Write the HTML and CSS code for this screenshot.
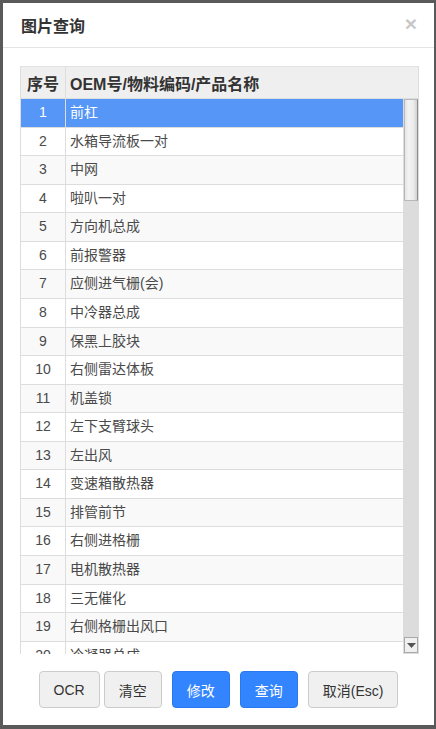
FILE: index.html
```html
<!DOCTYPE html>
<html lang="zh-CN">
<head>
  <meta charset="UTF-8">
  <meta name="viewport" content="width=device-width, initial-scale=1.0">
  <title>图片查询</title>
  <link rel="stylesheet" href="styles.css">
</head>
<body>
  <div class="modal">
    <div class="modal-header">
      <h4 class="modal-title">图片查询</h4>
      <span class="modal-close">&times;</span>
    </div>
    <div class="modal-body">
      <div class="grid">
        <table class="grid-head">
          <tr>
            <th class="col-no">序号</th>
            <th>OEM号/物料编码/产品名称</th>
          </tr>
        </table>
        <div class="grid-body">
          <div class="grid-rows">
            <table>
              <tr class="selected"><td class="col-no">1</td><td>前杠</td></tr>
              <tr><td class="col-no">2</td><td>水箱导流板一对</td></tr>
              <tr><td class="col-no">3</td><td>中网</td></tr>
              <tr><td class="col-no">4</td><td>啦叭一对</td></tr>
              <tr><td class="col-no">5</td><td>方向机总成</td></tr>
              <tr><td class="col-no">6</td><td>前报警器</td></tr>
              <tr><td class="col-no">7</td><td>应侧进气栅(会)</td></tr>
              <tr><td class="col-no">8</td><td>中冷器总成</td></tr>
              <tr><td class="col-no">9</td><td>保黑上胶块</td></tr>
              <tr><td class="col-no">10</td><td>右侧雷达体板</td></tr>
              <tr><td class="col-no">11</td><td>机盖锁</td></tr>
              <tr><td class="col-no">12</td><td>左下支臂球头</td></tr>
              <tr><td class="col-no">13</td><td>左出风</td></tr>
              <tr><td class="col-no">14</td><td>变速箱散热器</td></tr>
              <tr><td class="col-no">15</td><td>排管前节</td></tr>
              <tr><td class="col-no">16</td><td>右侧进格栅</td></tr>
              <tr><td class="col-no">17</td><td>电机散热器</td></tr>
              <tr><td class="col-no">18</td><td>三无催化</td></tr>
              <tr><td class="col-no">19</td><td>右侧格栅出风口</td></tr>
              <tr><td class="col-no">20</td><td>冷凝器总成</td></tr>
            </table>
          </div>
          <div class="scrollbar">
            <div class="scroll-thumb"></div>
            <div class="scroll-down">
              <svg width="9" height="5" viewBox="0 0 9 5"><path d="M0 0h9L4.5 5z" fill="#555"/></svg>
            </div>
          </div>
        </div>
      </div>
    </div>
    <div class="modal-footer">
      <button class="btn">OCR</button>
      <button class="btn btn-clear">清空</button>
      <button class="btn btn-primary">修改</button>
      <button class="btn btn-primary">查询</button>
      <button class="btn">取消(Esc)</button>
    </div>
  </div>
</body>
</html>
```

FILE: styles.css
```css
body {
  margin: 0;
  background-color: #5a5a5a;
  font-family: "Liberation Sans", "Noto Sans CJK SC", sans-serif;
  color: #333;
}
.modal {
  margin: 3px 2px 0 3px;
  width: 431px;
  height: 722px;
  background-color: #fff;
  display: flex;
  flex-direction: column;
}
.modal-header {
  display: flex;
  justify-content: space-between;
  align-items: center;
  height: 45px;
  padding: 0 17px 0 18px;
  border-bottom: 1px solid #e5e5e5;
  box-sizing: border-box;
}
.modal-title {
  margin: 0;
  font-size: 16px;
  font-weight: 600;
  color: #333;
}
.modal-close {
  font-size: 21px;
  font-weight: bold;
  color: #c8c8c8;
  line-height: 1;
  margin-top: -4px;
}
.modal-body {
  padding: 18px 15px 0 17px;
}
.grid {
  border: 1px solid #ddd;
  border-top-color: #e2e2e2;
  border-bottom: none;
}
table {
  width: 100%;
  border-collapse: collapse;
  table-layout: fixed;
}
.grid-head th {
  background-color: #efefef;
  font-size: 16px;
  font-weight: bold;
  color: #333;
  text-align: left;
  height: 31px;
  padding: 0 4px;
  border-bottom: 1px solid #ddd;
}
.grid-head th.col-no {
  text-align: center;
}
.col-no {
  width: 36px;
  border-right: 1px solid #ddd;
}
.grid-body {
  display: flex;
  height: 555px;
}
.grid-rows {
  flex: 1;
  overflow: hidden;
}
.grid-rows td {
  font-size: 14px;
  line-height: 19.57px;
  padding: 4px;
  border-bottom: 1px solid #ddd;
  color: #4a4a4a;
  white-space: nowrap;
  overflow: hidden;
}
.grid-rows td.col-no {
  text-align: center;
}
.grid-rows tr:nth-child(odd) td {
  background-color: #f9f9f9;
}
.grid-rows tr.selected td {
  background-color: #5596f7;
  color: #fff;
}
.scrollbar {
  width: 15px;
  display: flex;
  flex-direction: column;
  justify-content: space-between;
  background-color: #dcdcdc;
}
.scroll-thumb {
  height: 100px;
  margin: 0 0 0 1px;
  background: linear-gradient(to right, #e4e4e4 0, #f3f3f3 30%, #ececec 70%, #d0d0d0 100%);
  border: 1px solid #b8b8b8;
  border-right-color: #8c8c8c;
}
.scroll-down {
  height: 16px;
  margin: 0 0 1px 1px;
  display: flex;
  align-items: center;
  justify-content: center;
  background-color: #f0f0f0;
  border: 1px solid #a8a8a8;
  box-sizing: border-box;
}
.modal-footer {
  display: flex;
  justify-content: center;
  gap: 10px;
  padding-top: 17px;
}
.btn {
  height: 37px;
  padding: 0 14px;
  font-family: inherit;
  font-size: 14px;
  color: #333;
  background-color: #f0f0f0;
  border: 1px solid #ccc;
  border-radius: 4px;
}
.btn-clear {
  margin-left: -6px;
}
.btn-primary {
  color: #fff;
  background-color: #3385ff;
  border-color: #2a78ee;
}
```
